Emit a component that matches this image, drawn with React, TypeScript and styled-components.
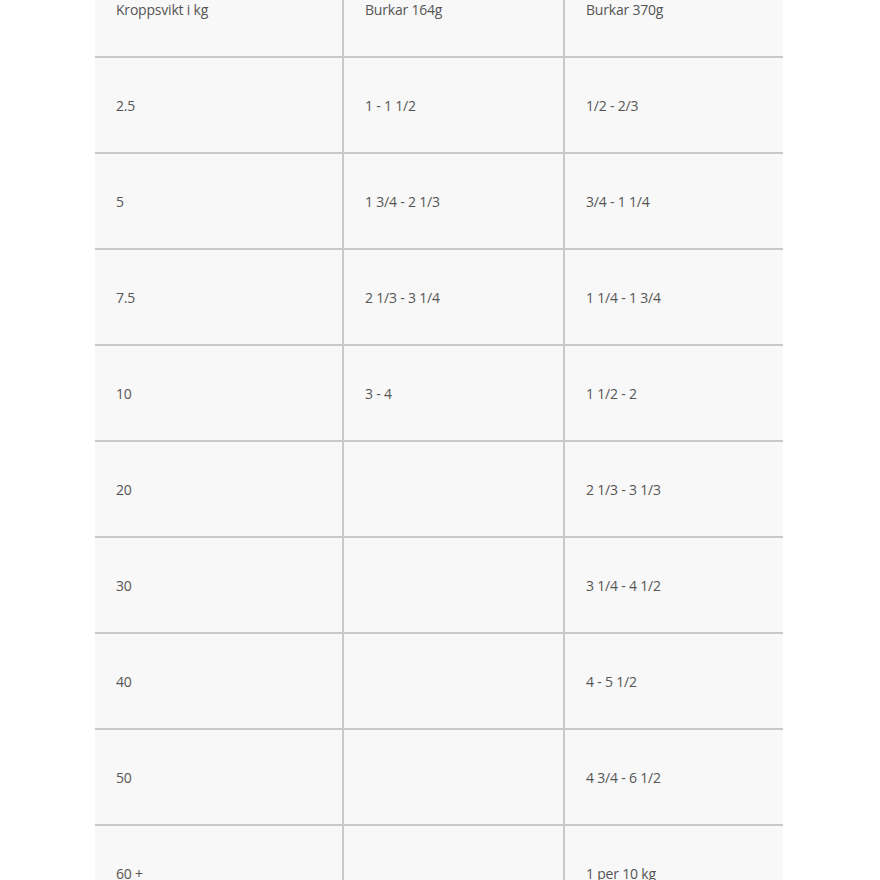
import React from "react";
import styled, { createGlobalStyle } from "styled-components";

const Global = createGlobalStyle`
  html, body { margin: 0; padding: 0; background: #ffffff; }
  body { font-family: "Open Sans", "Liberation Sans", sans-serif; overflow: hidden; }
`;

const Page = styled.div`
  width: 880px;
  height: 880px;
  overflow: hidden;
  background: #ffffff;
`;

const Table = styled.div`
  display: grid;
  grid-template-columns: 249px 221px 218px;
  width: 688px;
  margin: -38px 0 0 95px;
  background: #f8f8f8;
`;

const Cell = styled.div<{ $last: boolean }>`
  height: 94px;
  display: flex;
  align-items: center;
  padding-left: 21px;
  border-bottom: 2px solid #c9c9c9;
  border-right: ${(p) => (p.$last ? "none" : "2px solid #c9c9c9")};
  font-size: 14px;
  color: #555555;
  letter-spacing: -0.2px;
  white-space: nowrap;
`;

const rows: [string, string, string][] = [
  ["Kroppsvikt i kg", "Burkar 164g", "Burkar 370g"],
  ["2.5", "1 - 1 1/2", "1/2 - 2/3"],
  ["5", "1 3/4 - 2 1/3", "3/4 - 1 1/4"],
  ["7.5", "2 1/3 - 3 1/4", "1 1/4 - 1 3/4"],
  ["10", "3 - 4", "1 1/2 - 2"],
  ["20", "", "2 1/3 - 3 1/3"],
  ["30", "", "3 1/4 - 4 1/2"],
  ["40", "", "4 - 5 1/2"],
  ["50", "", "4 3/4 - 6 1/2"],
  ["60 +", "", "1 per 10 kg"],
];

export default function App() {
  return (
    <Page>
      <Global />
      <Table>
        {rows.map((r, i) =>
          r.map((c, j) => (
            <Cell key={`${i}-${j}`} $last={j === 2}>
              {c}
            </Cell>
          ))
        )}
      </Table>
    </Page>
  );
}
